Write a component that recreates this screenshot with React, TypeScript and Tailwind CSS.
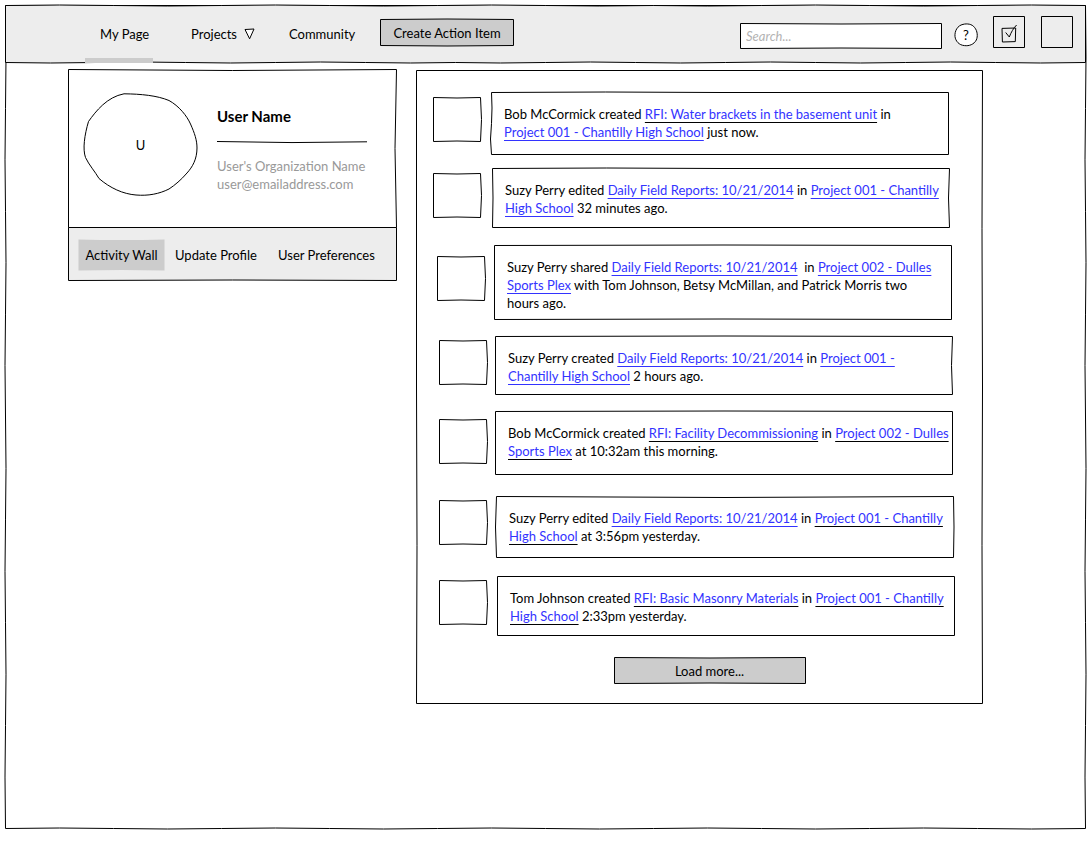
import type { ReactNode } from "react";

type Bows = { top?: number[]; right?: number[]; bottom?: number[]; left?: number[] };

/** One hand-drawn edge: each bow bends its own stretch of the line by that many units. */
function edge(x1: number, y1: number, x2: number, y2: number, bows: number[]) {
  const n = bows.length;
  const horizontal = y1 === y2;
  return bows
    .map((bow, i) => {
      const mid = (i + 0.5) / n;
      const end = (i + 1) / n;
      const cx = x1 + (x2 - x1) * mid + (horizontal ? 0 : bow);
      const cy = y1 + (y2 - y1) * mid + (horizontal ? bow : 0);
      return `Q${cx} ${cy} ${x1 + (x2 - x1) * end} ${y1 + (y2 - y1) * end}`;
    })
    .join(" ");
}

function Sketch({
  w,
  h,
  bows = {},
  className = "fill-none stroke-black",
}: {
  w: number;
  h: number;
  bows?: Bows;
  className?: string;
}) {
  const { top = [0], right = [0], bottom = [0], left = [0] } = bows;
  const r = w - 0.5;
  const b = h - 0.5;
  const d = [
    "M0.5 0.5",
    edge(0.5, 0.5, r, 0.5, top),
    edge(r, 0.5, r, b, right),
    edge(r, b, 0.5, b, bottom),
    edge(0.5, b, 0.5, 0.5, left),
    "Z",
  ].join(" ");
  return (
    <svg
      aria-hidden="true"
      viewBox={`0 0 ${w} ${h}`}
      preserveAspectRatio="none"
      className="pointer-events-none absolute inset-0 h-full w-full overflow-visible"
    >
      <path d={d} className={className} vectorEffect="non-scaling-stroke" />
    </svg>
  );
}

function Ref({ children, dark = false }: { children: ReactNode; dark?: boolean }) {
  return (
    <a
      href="#"
      className={`text-[#3333ff] underline decoration-1 underline-offset-3 [text-decoration-skip-ink:none] ${
        dark ? "decoration-black" : "decoration-[#3333ff]"
      }`}
    >
      {children}
    </a>
  );
}

type Activity = {
  row: string;
  avatar: string;
  card: string;
  h: number;
  bows: Bows;
  body: ReactNode;
};

const activities: Activity[] = [
  {
    row: "pl-[17px] gap-2.5 mb-[13px]",
    avatar: "mt-[5px]",
    card: "min-h-[63px]",
    h: 63,
    bows: { top: [-1, 0], left: [-2, 1] },
    body: (
      <>
        Bob McCormick created <Ref dark>RFI: Water brackets in the basement unit</Ref> in
        <br />
        <Ref>Project 001 - Chantilly High School</Ref> just now.
      </>
    ),
  },
  {
    row: "pl-[17px] gap-[11px] mb-[17px]",
    avatar: "mt-[5px]",
    card: "min-h-15",
    h: 60,
    bows: { top: [-1, 0], right: [-2], left: [1] },
    body: (
      <>
        Suzy Perry edited <Ref>Daily Field Reports: 10/21/2014</Ref> in{" "}
        <Ref>
          Project 001 - Chantilly
          <br />
          High School
        </Ref>{" "}
        32 minutes ago.
      </>
    ),
  },
  {
    row: "pl-[21px] gap-[9px] mb-4",
    avatar: "mt-[11px]",
    card: "min-h-[75px]",
    h: 75,
    bows: { top: [-1], bottom: [-1] },
    body: (
      <>
        Suzy Perry shared <Ref>Daily Field Reports: 10/21/2014</Ref>&nbsp; in{" "}
        <Ref>
          Project 002 - Dulles
          <br />
          Sports Plex
        </Ref>{" "}
        with Tom Johnson, Betsy McMillan, and Patrick Morris two
        <br />
        hours ago.
      </>
    ),
  },
  {
    row: "pl-[23px] gap-2 mb-4",
    avatar: "mt-1",
    card: "min-h-[59px]",
    h: 59,
    bows: { top: [-1], right: [-2] },
    body: (
      <>
        Suzy Perry created <Ref>Daily Field Reports: 10/21/2014</Ref> in{" "}
        <Ref>
          Project 001 -<br />
          Chantilly High School
        </Ref>{" "}
        2 hours ago.
      </>
    ),
  },
  {
    row: "pl-[23px] gap-2 mb-[21px]",
    avatar: "mt-2",
    card: "min-h-16",
    h: 64,
    bows: { top: [-1] },
    body: (
      <>
        Bob McCormick created <Ref dark>RFI: Facility Decommissioning</Ref> in{" "}
        <Ref dark>
          Project 002 - Dulles
          <br />
          Sports Plex
        </Ref>{" "}
        at 10:32am this morning.
      </>
    ),
  },
  {
    row: "pl-[23px] gap-[9px] mb-[18px]",
    avatar: "mt-1",
    card: "min-h-[62px]",
    h: 62,
    bows: { top: [2], right: [1], left: [-2] },
    body: (
      <>
        Suzy Perry edited <Ref>Daily Field Reports: 10/21/2014</Ref> in{" "}
        <Ref dark>
          Project 001 - Chantilly
          <br />
          High School
        </Ref>{" "}
        at 3:56pm yesterday.
      </>
    ),
  },
  {
    row: "pl-[23px] gap-2.5",
    avatar: "mt-1",
    card: "min-h-15",
    h: 60,
    bows: {},
    body: (
      <>
        Tom Johnson created <Ref dark>RFI: Basic Masonry Materials</Ref> in{" "}
        <Ref dark>
          Project 001 - Chantilly
          <br />
          High School
        </Ref>{" "}
        2:33pm yesterday.
      </>
    ),
  },
];

function ActivityRow({ row, avatar, card, h, bows, body }: Activity) {
  return (
    <li className={`flex items-start ${row}`}>
      <div className={`relative h-[45px] w-12 shrink-0 ${avatar}`}>
        <Sketch w={48} h={45} bows={{ top: [1], right: [2], bottom: [-1] }} />
      </div>
      <div className={`relative w-[458px] shrink-0 pt-[13px] pb-2 pl-[13px] ${card}`}>
        <Sketch w={458} h={h} bows={bows} />
        <p className="relative leading-[18px] whitespace-nowrap">{body}</p>
      </div>
    </li>
  );
}

function Header() {
  return (
    <header className="relative flex h-[58px] items-center pr-[13px]">
      <Sketch
        w={1081}
        h={58}
        className="fill-[#ededed] stroke-black"
        bows={{
          top: [-1, 1, -1, 1, -1, 1, 1, -1, 1, -1],
          bottom: [1, -1, 1, -1, 1, -1, 1, 1, -1, 1, -1, 1],
        }}
      />
      <nav className="relative flex h-full items-center">
        <a href="#" className="ml-20 flex h-full w-[68px] flex-col justify-between pt-5">
          <span className="pl-[15px] leading-[18px] whitespace-nowrap">My Page</span>
          <span className="h-[5px] bg-[#cccccc]" />
        </a>
        <button type="button" className="ml-[38px] flex w-16 items-center justify-between">
          Projects
          <svg viewBox="0 0 11 12" className="h-3 w-[11px]" aria-hidden="true">
            <path d="M1 1.5 L10 1 L5.6 10.8 Z" className="fill-white stroke-black" />
          </svg>
        </button>
        <a href="#" className="ml-[34px] w-[60px]">
          Community
        </a>
        <button type="button" className="relative mb-1 ml-[31px] h-[27px] w-[134px] pt-0.5">
          <Sketch
            w={134}
            h={27}
            className="fill-[#cccccc] stroke-black"
            bows={{ top: [-1], bottom: [1] }}
          />
          <span className="relative">Create Action Item</span>
        </button>
      </nav>
      <div className="relative ml-auto flex items-start self-start pt-[11px]">
        <div className="relative mt-[7px] mr-3 h-[26px] w-[202px]">
          <Sketch
            w={202}
            h={26}
            className="fill-white stroke-black"
            bows={{ top: [1], bottom: [-1] }}
          />
          <input
            type="search"
            aria-label="Search"
            placeholder="Search..."
            className="relative h-full w-full bg-transparent px-1.5 italic outline-none placeholder:text-[#b3b3b3]"
          />
        </div>
        <button type="button" aria-label="Help" className="relative mt-[7px] mr-[15px] size-6">
          <svg viewBox="0 0 24 24" className="absolute inset-0 size-6" aria-hidden="true">
            <path
              d="M9 1.4 C13 0.3 18 1 20.5 4.4 C23.6 8 23.9 13.5 22.3 17 C20 21.5 15 23.2 10.5 22.6 C5 22.2 1.5 18 1 13.5 C0.5 8 3.5 2.5 9 1.4 Z"
              className="fill-white stroke-black"
            />
          </svg>
          <span className="relative">?</span>
        </button>
        <button type="button" aria-label="Tasks" className="relative mr-4 size-8">
          <Sketch w={32} h={32} />
          <svg viewBox="0 0 32 32" className="relative size-8" aria-hidden="true">
            <path
              d="M9 12.4 L22.7 12 L22.3 25.6 L9.4 26 Z M12.7 16.5 L16.3 21 C18 16.5 20.5 12 23.6 9"
              className="fill-none stroke-black"
            />
          </svg>
        </button>
        <button type="button" aria-label="Account" className="relative size-8">
          <Sketch w={32} h={32} />
        </button>
      </div>
    </header>
  );
}

function Profile() {
  return (
    <section className="w-[329px] shrink-0">
      <div className="relative flex h-[159px] pt-6 pl-[15px]">
        <Sketch w={329} h={159} bows={{ top: [2], right: [-3] }} />
        <div className="relative flex h-[103px] w-[115px] items-center justify-center">
          <svg viewBox="0 0 115 103" className="absolute inset-0 h-full w-full" aria-hidden="true">
            <path
              d="M41 0.8 C58 1 74 2.5 86 7.5 C96 13 104 23 107.5 31 C111.500 40 114 47 114 55 C114 66 109.5 74 104 80 C98 87 92 92 86 96 C76 101 65 103 53 102 C40 101 27 95 16 85.5 C12 78.5 6 72 2.5 64.5 C-0.5 56 1.5 42 5.5 28.5 C13 18 24 4 41 0.8 Z"
              className="fill-none stroke-black"
            />
          </svg>
          <span className="relative">U</span>
        </div>
        <div className="relative pt-[13px] pl-[19px]">
          <h1 className="text-[15px] leading-5 font-bold">User Name</h1>
          <svg
            viewBox="0 0 150 4"
            preserveAspectRatio="none"
            className="mt-[15px] h-1 w-[150px]"
            aria-hidden="true"
          >
            <path d="M0 0.5 Q75 2.5 150 0.8" className="fill-none stroke-black" />
          </svg>
          <p className="mt-3 leading-[18px] whitespace-nowrap text-[#999999]">
            User&apos;s Organization Name
            <br />
            user@emailaddress.com
          </p>
        </div>
      </div>
      <nav className="relative -mt-px flex h-[54px] items-center pt-0.5 pl-2.5">
        <Sketch w={329} h={54} className="fill-[#ededed] stroke-black" bows={{ bottom: [-1] }} />
        <a href="#" className="relative flex h-8 w-[87px] items-center justify-center">
          <Sketch
            w={87}
            h={32}
            className="fill-[#cccccc] stroke-none"
            bows={{ top: [1], bottom: [-1] }}
          />
          <span className="relative">Activity Wall</span>
        </a>
        <a href="#" className="relative ml-2.5 w-[83px]">
          Update Profile
        </a>
        <a href="#" className="relative ml-5">
          User Preferences
        </a>
      </nav>
    </section>
  );
}

function Feed() {
  return (
    <section className="relative mt-px w-[567px] shrink-0 pt-[22px] pb-5">
      <Sketch w={567} h={634} bows={{ left: [1, 0], right: [-1, -1] }} />
      <ul className="relative">
        {activities.map((activity, i) => (
          <ActivityRow key={i} {...activity} />
        ))}
      </ul>
      <div className="flex justify-center pt-[21px] pl-5">
        <button type="button" className="relative h-[27px] w-48">
          <Sketch
            w={192}
            h={27}
            className="fill-[#cccccc] stroke-black"
            bows={{ top: [1], bottom: [-1] }}
          />
          <span className="relative">Load more...</span>
        </button>
      </div>
    </section>
  );
}

export default function App() {
  return (
    <div className="min-h-screen bg-white pt-[5px] pr-0.5 pb-5 pl-[5px] font-['Lato','Noto_Sans',sans-serif] text-[13px] leading-[18px] text-black">
      <div className="relative min-h-[calc(100vh-26px)]">
        <Sketch
          w={1081}
          h={824}
          bows={{
            right: [1, -1, 1, -1, 1, -1, 1, -1],
            bottom: [1, -1, 1, -1, 1, -1, 1, -1, 1, -1],
            left: [-1, 1, -1, 1, -1, 1, -1, 1],
          }}
        />
        <Header />
        <main className="relative flex items-start gap-[19px] pt-1.5 pl-[63px]">
          <Profile />
          <Feed />
        </main>
      </div>
    </div>
  );
}
